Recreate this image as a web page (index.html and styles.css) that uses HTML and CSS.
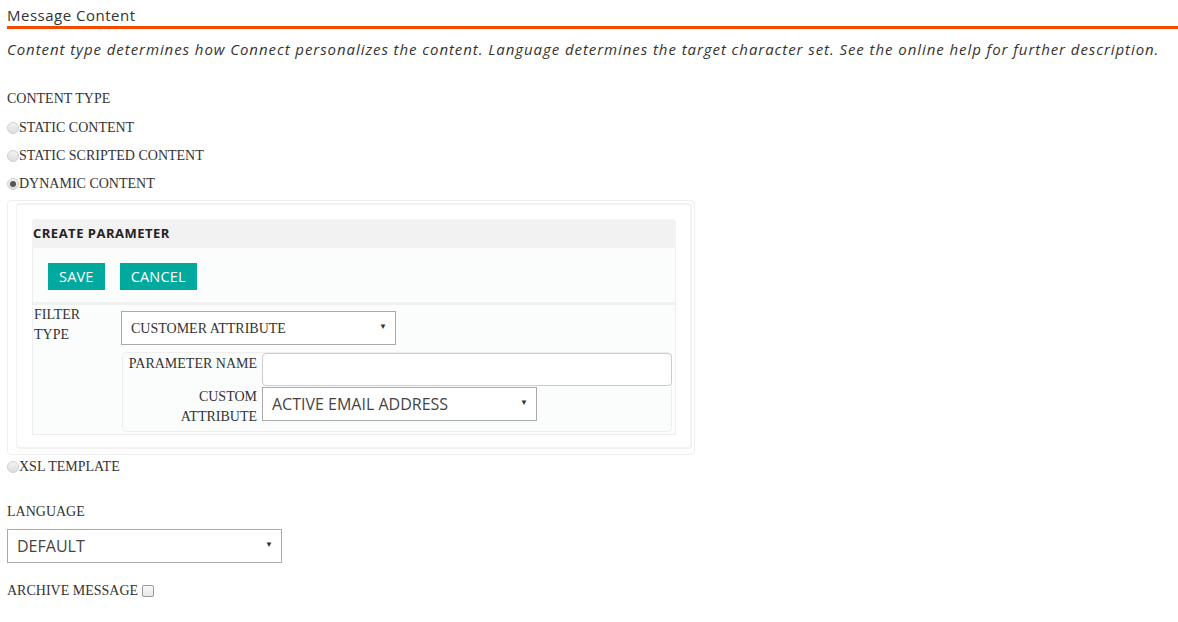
FILE: index.html
```html
<!DOCTYPE html>
<html lang="en">
<head>
    <meta charset="UTF-8">
    <meta name="viewport" content="width=device-width, initial-scale=1.0">
    <title>Message Content</title>
    <link rel="stylesheet" href="styles.css">
</head>
<body>
    <div class="page">
        <h2 class="section-title">Message Content</h2>
        <p class="intro">Content type determines how Connect personalizes the content. Language determines the target character set. See the online help for further description.</p>

        <div class="field-label type-label">CONTENT TYPE</div>
        <label class="radio-row"><input type="radio" name="contentType">STATIC CONTENT</label>
        <label class="radio-row"><input type="radio" name="contentType">STATIC SCRIPTED CONTENT</label>
        <label class="radio-row"><input type="radio" name="contentType" checked>DYNAMIC CONTENT</label>

        <div class="dynamic-box">
            <div class="dynamic-inner">
                <div class="param-head">CREATE PARAMETER</div>
                <div class="param-body">
                    <div class="param-actions">
                        <button class="btn">SAVE</button>
                        <button class="btn">CANCEL</button>
                    </div>
                    <div class="filter-row">
                        <div class="filter-label">FILTER<br>TYPE</div>
                        <div class="filter-fields">
                            <span class="select-wrap serif-select">
                                <select><option>CUSTOMER ATTRIBUTE</option></select>
                            </span>
                            <div class="attr-box">
                                <div class="attr-row">
                                    <label class="attr-label">PARAMETER NAME</label>
                                    <input type="text" class="text-input">
                                </div>
                                <div class="attr-row">
                                    <label class="attr-label">CUSTOM<br>ATTRIBUTE</label>
                                    <span class="select-wrap">
                                        <select><option>ACTIVE EMAIL ADDRESS</option></select>
                                    </span>
                                </div>
                            </div>
                        </div>
                    </div>
                </div>
            </div>
        </div>

        <label class="radio-row xsl-row"><input type="radio" name="contentType">XSL TEMPLATE</label>

        <div class="field-label language-label">LANGUAGE</div>
        <span class="select-wrap">
            <select><option>DEFAULT</option></select>
        </span>

        <label class="archive-row">ARCHIVE MESSAGE <input type="checkbox"></label>
    </div>
</body>
</html>
```

FILE: styles.css
```css
body {
    margin: 0;
    background: #fff;
    font-family: "Liberation Serif", "Times New Roman", serif;
    font-size: 14px;
    color: #333;
}
.page {
    padding: 5px 0 0 7px;
}
.section-title {
    margin: 0;
    font-family: "Open Sans", sans-serif;
    font-weight: normal;
    font-size: 15px;
    letter-spacing: 0.5px;
    line-height: 20px;
    color: #333;
    padding-bottom: 1px;
    border-bottom: 3px solid #f24b00;
}
.intro {
    margin: 10px 0 0;
    font-family: "Open Sans", sans-serif;
    font-style: italic;
    font-size: 15px;
    line-height: 20px;
    letter-spacing: 0.93px;
    color: #333;
}
.field-label {
    line-height: 20px;
}
.type-label {
    margin-top: 30px;
    margin-bottom: 5px;
}
.radio-row {
    display: flex;
    align-items: center;
    height: 28px;
    line-height: 20px;
}
.radio-row input {
    appearance: none;
    -webkit-appearance: none;
    margin: 0;
    width: 12px;
    height: 12px;
    border: 1px solid #cfcfcf;
    border-radius: 50%;
    background: linear-gradient(#f4f4f4, #dcdcdc);
    position: relative;
}
.radio-row input:checked::after {
    content: "";
    position: absolute;
    left: 2px;
    top: 2px;
    width: 6px;
    height: 6px;
    border-radius: 50%;
    background: #555;
}
.dynamic-box {
    width: 676px;
    margin-top: 2px;
    border: 1px solid #eee;
    border-radius: 4px;
    padding: 2px 2px 5px 8px;
}
.dynamic-inner {
    border: 2px solid #f2f2f2;
    border-left-width: 1px;
    border-radius: 4px;
    padding: 14px 14px 12px 15px;
}
.param-head {
    background: #f2f2f2;
    border-radius: 4px 4px 0 0;
    height: 29px;
    line-height: 29px;
    padding-left: 1px;
    font-family: "Open Sans", sans-serif;
    font-weight: 700;
    font-size: 13px;
    letter-spacing: 0.5px;
    color: #222;
}
.param-body {
    background: #fbfdfd;
    border: 1px solid #eee;
    border-top: none;
}
.param-actions {
    display: flex;
    gap: 15px;
    padding: 15px 15px 12px;
    border-bottom: 3px solid #f0f0f0;
}
.btn {
    background: #00a99d;
    color: #fff;
    border: none;
    height: 27px;
    padding: 0 11px;
    font-family: "Open Sans", sans-serif;
    font-size: 14.5px;
    letter-spacing: 0.2px;
    cursor: pointer;
}
.filter-row {
    display: flex;
    padding: 0 3px 2px 0;
}
.filter-label {
    width: 88px;
    box-sizing: border-box;
    line-height: 20px;
    padding-left: 1px;
}
.filter-fields {
    flex: 1;
    padding-top: 6px;
}
.select-wrap {
    position: relative;
    display: inline-block;
    width: 275px;
}
.select-wrap select {
    appearance: none;
    -webkit-appearance: none;
    display: block;
    width: 100%;
    height: 34px;
    border: 1px solid #aaa;
    border-radius: 0;
    background: #fff;
    padding: 0 9px;
    font-family: "Open Sans", sans-serif;
    font-size: 16px;
    color: #444;
}
.serif-select select {
    font-family: "Liberation Serif", "Times New Roman", serif;
    font-size: 14px;
    color: #333;
}
.select-wrap::after {
    content: "\25BC";
    position: absolute;
    right: 9px;
    top: 11px;
    font-size: 8px;
    color: #333;
    pointer-events: none;
}
.attr-box {
    margin-top: 7px;
    margin-left: 1px;
    border: 1px solid #eee;
    border-radius: 4px;
    padding: 0 0 4px;
}
.attr-row {
    display: flex;
    align-items: flex-start;
}
.attr-label {
    width: 139px;
    flex-shrink: 0;
    white-space: nowrap;
    text-align: right;
    line-height: 20px;
    padding-top: 1px;
    padding-right: 5px;
    box-sizing: border-box;
}
.text-input {
    width: 410px;
    height: 33px;
    box-sizing: border-box;
    border: 1px solid #ccc;
    border-radius: 4px;
    margin: 0 -1px 0 0;
}
.attr-row + .attr-row {
    margin-top: 1px;
}
.attr-row + .attr-row .attr-label {
    padding-top: 0;
}
.xsl-row {
    height: 24px;
}
.language-label {
    margin-top: 23px;
    margin-bottom: 7px;
}
.archive-row {
    display: flex;
    align-items: center;
    gap: 4px;
    margin-top: 18px;
    line-height: 20px;
}
.archive-row input {
    appearance: none;
    -webkit-appearance: none;
    margin: 0;
    width: 12px;
    height: 12px;
    border: 1px solid #999;
    border-radius: 2px;
    background: linear-gradient(#fafafa, #e6e6e6);
}
```
